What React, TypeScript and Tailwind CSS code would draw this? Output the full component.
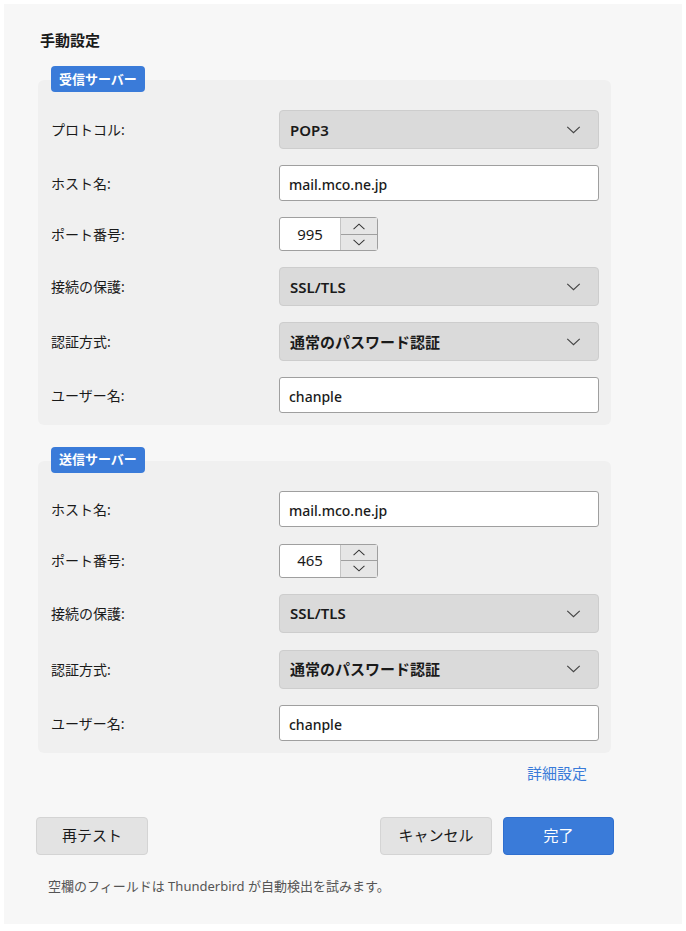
import { ReactNode } from "react";

const font = {
  fontFamily: '"Noto Sans", "Noto Sans CJK JP", sans-serif',
};

function Chevron({ up = false, className = "" }: { up?: boolean; className?: string }) {
  return (
    <svg viewBox="0 0 16 9" className={className} fill="none" stroke="currentColor" strokeWidth="1.3">
      {up ? <polyline points="1,8 8,1.5 15,8" /> : <polyline points="1,1 8,7.5 15,1" />}
    </svg>
  );
}

function Select({ value }: { value: string }) {
  return (
    <div className="flex h-[39px] w-[320px] items-center justify-between rounded-[4px] border border-[#cdcdcd] bg-[#dadada] pl-[10px] pr-[17px]">
      <span className="text-[15px] font-semibold text-[#1a1a1a]">{value}</span>
      <Chevron className="h-[8px] w-[15px] text-[#444]" />
    </div>
  );
}

function TextInput({ value }: { value: string }) {
  return (
    <div className="flex h-[36px] w-[320px] items-center rounded-[3px] border border-[#9f9f9f] bg-white px-[9px] pt-[2px]">
      <span className="text-[14px] font-medium text-[#1a1a1a]">{value}</span>
    </div>
  );
}

function Spin({ value }: { value: string }) {
  return (
    <div className="flex h-[34px] w-[99px] rounded-[3px] border border-[#9f9f9f] bg-white">
      <div className="flex w-[60px] items-center justify-center text-[15px] text-[#1a1a1a]">{value}</div>
      <div className="flex flex-1 flex-col border-l border-[#c4c4c4] bg-[#e6e6e6]">
        <div className="flex flex-1 items-center justify-center border-b border-[#9f9f9f]">
          <Chevron up className="h-[7px] w-[14px] text-[#333]" />
        </div>
        <div className="flex flex-1 items-center justify-center">
          <Chevron className="h-[7px] w-[14px] text-[#333]" />
        </div>
      </div>
    </div>
  );
}

function Row({ label, children }: { label: string; children: ReactNode }) {
  return (
    <div className="flex items-center">
      <div className="w-[228px] text-[14px] text-[#1a1a1a]">{label}</div>
      {children}
    </div>
  );
}

function Group({
  legend,
  gap,
  children,
}: {
  legend: string;
  gap: string;
  children: ReactNode;
}) {
  return (
    <div>
      <div className="relative z-10 ml-[13px] inline-flex h-[26px] items-center rounded-[4px] bg-[#3a7bd9] px-[8px] text-[13px] font-bold text-white">
        {legend}
      </div>
      <div
        className={`-mt-[12px] flex w-[573px] flex-col rounded-[6px] bg-[#f0f0f0] pb-[12px] pl-[13px] pt-[30px] ${gap}`}
      >
        {children}
      </div>
    </div>
  );
}

export default function App() {
  return (
    <div className="h-[931px] w-[686px] bg-white p-[4px]" style={font}>
      <div className="flex h-[920px] w-[678px] flex-col bg-[#f7f7f7] pl-[34px] pt-[25px]">
        <div className="mb-[14px] ml-[2px] text-[15px] font-semibold text-[#1a1a1a]">手動設定</div>

        <Group legend="受信サーバー" gap="gap-[16px]">
          <Row label="プロトコル:">
            <Select value="POP3" />
          </Row>
          <Row label="ホスト名:">
            <TextInput value="mail.mco.ne.jp" />
          </Row>
          <Row label="ポート番号:">
            <Spin value="995" />
          </Row>
          <Row label="接続の保護:">
            <Select value="SSL/TLS" />
          </Row>
          <Row label="認証方式:">
            <Select value="通常のパスワード認証" />
          </Row>
          <Row label="ユーザー名:">
            <TextInput value="chanple" />
          </Row>
        </Group>

        <div className="h-[21px]" />

        <Group legend="送信サーバー" gap="gap-[16.5px]">
          <Row label="ホスト名:">
            <TextInput value="mail.mco.ne.jp" />
          </Row>
          <Row label="ポート番号:">
            <Spin value="465" />
          </Row>
          <Row label="接続の保護:">
            <Select value="SSL/TLS" />
          </Row>
          <Row label="認証方式:">
            <Select value="通常のパスワード認証" />
          </Row>
          <Row label="ユーザー名:">
            <TextInput value="chanple" />
          </Row>
        </Group>

        <div className="mt-[9px] flex w-[549px] justify-end">
          <span className="text-[15px] text-[#3a7bd9]">詳細設定</span>
        </div>

        <div className="mt-[32px] -ml-[2px] flex w-[578px] items-center">
          <button className="h-[38px] w-[112px] rounded-[4px] border border-[#d4d4d4] bg-[#e3e3e3] text-[15px] text-[#1a1a1a]">
            再テスト
          </button>
          <div className="flex-1" />
          <button className="h-[38px] w-[112px] rounded-[4px] border border-[#d4d4d4] bg-[#e3e3e3] text-[15px] text-[#1a1a1a]">
            キャンセル
          </button>
          <button className="ml-[11px] h-[38px] w-[111px] rounded-[4px] border border-[#2f6fcf] bg-[#3a7bd9] text-[15px] text-white">
            完了
          </button>
        </div>

        <div className="ml-[10px] mt-[22px] text-[13px] text-[#555]">
          空欄のフィールドは Thunderbird が自動検出を試みます。
        </div>
      </div>
    </div>
  );
}
